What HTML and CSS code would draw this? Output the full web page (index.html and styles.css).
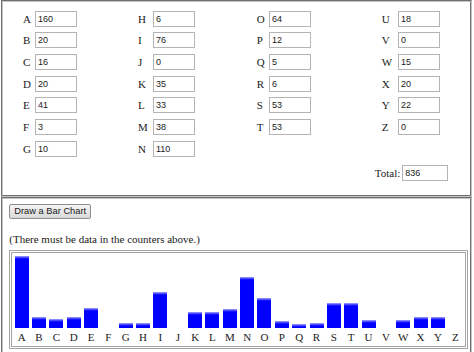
FILE: index.html
```html
<!DOCTYPE html>
<html>
<head>
<meta charset="utf-8">
<title>Letter Counter Bar Chart</title>
<link rel="stylesheet" href="styles.css">
</head>
<body>
<div class="page">
  <section class="panel counters">
    <div class="cols">
      <div class="col col-1">
        <div class="row"><span class="lbl">A</span><input class="num" value="160"></div>
        <div class="row"><span class="lbl">B</span><input class="num" value="20"></div>
        <div class="row"><span class="lbl">C</span><input class="num" value="16"></div>
        <div class="row"><span class="lbl">D</span><input class="num" value="20"></div>
        <div class="row"><span class="lbl">E</span><input class="num" value="41"></div>
        <div class="row"><span class="lbl">F</span><input class="num" value="3"></div>
        <div class="row"><span class="lbl">G</span><input class="num" value="10"></div>
      </div>
      <div class="col col-2">
        <div class="row"><span class="lbl">H</span><input class="num" value="6"></div>
        <div class="row"><span class="lbl">I</span><input class="num" value="76"></div>
        <div class="row"><span class="lbl">J</span><input class="num" value="0"></div>
        <div class="row"><span class="lbl">K</span><input class="num" value="35"></div>
        <div class="row"><span class="lbl">L</span><input class="num" value="33"></div>
        <div class="row"><span class="lbl">M</span><input class="num" value="38"></div>
        <div class="row"><span class="lbl">N</span><input class="num" value="110"></div>
      </div>
      <div class="col col-3">
        <div class="row"><span class="lbl">O</span><input class="num" value="64"></div>
        <div class="row"><span class="lbl">P</span><input class="num" value="12"></div>
        <div class="row"><span class="lbl">Q</span><input class="num" value="5"></div>
        <div class="row"><span class="lbl">R</span><input class="num" value="6"></div>
        <div class="row"><span class="lbl">S</span><input class="num" value="53"></div>
        <div class="row"><span class="lbl">T</span><input class="num" value="53"></div>
      </div>
      <div class="col col-4">
        <div class="row"><span class="lbl">U</span><input class="num" value="18"></div>
        <div class="row"><span class="lbl">V</span><input class="num" value="0"></div>
        <div class="row"><span class="lbl">W</span><input class="num" value="15"></div>
        <div class="row"><span class="lbl">X</span><input class="num" value="20"></div>
        <div class="row"><span class="lbl">Y</span><input class="num" value="22"></div>
        <div class="row"><span class="lbl">Z</span><input class="num" value="0"></div>
      </div>
    </div>
    <div class="total-row">
      <span class="total-lbl">Total:</span><input class="num total" value="836">
    </div>
  </section>

  <section class="panel chart-panel">
    <button class="draw-btn" type="button">Draw a Bar Chart</button>
    <p class="note">(There must be data in the counters above.)</p>
    <div class="chart-frame">
      <div class="chart">
        <div class="bar-col"><div class="bar-area"><div class="bar" style="height:72px"></div></div><span class="letter">A</span></div>
        <div class="bar-col"><div class="bar-area"><div class="bar" style="height:11px"></div></div><span class="letter">B</span></div>
        <div class="bar-col"><div class="bar-area"><div class="bar" style="height:9px"></div></div><span class="letter">C</span></div>
        <div class="bar-col"><div class="bar-area"><div class="bar" style="height:11px"></div></div><span class="letter">D</span></div>
        <div class="bar-col"><div class="bar-area"><div class="bar" style="height:20px"></div></div><span class="letter">E</span></div>
        <div class="bar-col"><div class="bar-area"></div><span class="letter">F</span></div>
        <div class="bar-col"><div class="bar-area"><div class="bar" style="height:5px"></div></div><span class="letter">G</span></div>
        <div class="bar-col"><div class="bar-area"><div class="bar" style="height:5px"></div></div><span class="letter">H</span></div>
        <div class="bar-col"><div class="bar-area"><div class="bar" style="height:36px"></div></div><span class="letter">I</span></div>
        <div class="bar-col"><div class="bar-area"></div><span class="letter">J</span></div>
        <div class="bar-col"><div class="bar-area"><div class="bar" style="height:16px"></div></div><span class="letter">K</span></div>
        <div class="bar-col"><div class="bar-area"><div class="bar" style="height:16px"></div></div><span class="letter">L</span></div>
        <div class="bar-col"><div class="bar-area"><div class="bar" style="height:19px"></div></div><span class="letter">M</span></div>
        <div class="bar-col"><div class="bar-area"><div class="bar" style="height:51px"></div></div><span class="letter">N</span></div>
        <div class="bar-col"><div class="bar-area"><div class="bar" style="height:30px"></div></div><span class="letter">O</span></div>
        <div class="bar-col"><div class="bar-area"><div class="bar" style="height:7px"></div></div><span class="letter">P</span></div>
        <div class="bar-col"><div class="bar-area"><div class="bar" style="height:4px"></div></div><span class="letter">Q</span></div>
        <div class="bar-col"><div class="bar-area"><div class="bar" style="height:5px"></div></div><span class="letter">R</span></div>
        <div class="bar-col"><div class="bar-area"><div class="bar" style="height:25px"></div></div><span class="letter">S</span></div>
        <div class="bar-col"><div class="bar-area"><div class="bar" style="height:25px"></div></div><span class="letter">T</span></div>
        <div class="bar-col"><div class="bar-area"><div class="bar" style="height:8px"></div></div><span class="letter">U</span></div>
        <div class="bar-col"><div class="bar-area"></div><span class="letter">V</span></div>
        <div class="bar-col"><div class="bar-area"><div class="bar" style="height:8px"></div></div><span class="letter">W</span></div>
        <div class="bar-col"><div class="bar-area"><div class="bar" style="height:11px"></div></div><span class="letter">X</span></div>
        <div class="bar-col"><div class="bar-area"><div class="bar" style="height:11px"></div></div><span class="letter">Y</span></div>
        <div class="bar-col"><div class="bar-area"></div><span class="letter">Z</span></div>
      </div>
    </div>
  </section>
</div>
</body>
</html>
```

FILE: styles.css
```css
html {
  overflow: hidden;
  background: #ffffff;
}

body {
  margin: 0;
  font-family: "Liberation Serif", "Times New Roman", serif;
  font-size: 11px;
  color: #1a1a1a;
  background: #ffffff;
}

.page {
  padding: 0 2px 0 1px;
}

.panel {
  border: 2px groove #c4c4c4;
}

/* ---------- counters ---------- */
.counters {
  padding: 6px 0 14px 20px;
}

.cols {
  display: flex;
  align-items: flex-start;
}

.col {
  display: flex;
  flex-direction: column;
}

.col-2 { margin-left: 61px; }
.col-3 { margin-left: 61.7px; }
.col-4 { margin-left: 70.7px; }

.row {
  display: flex;
  align-items: center;
  height: 21.67px;
}

.lbl {
  display: block;
}

.col-1 .lbl { width: 12px; }
.col-2 .lbl { width: 15px; }
.col-3 .lbl { width: 12.3px; }
.col-4 .lbl { width: 16.3px; }

.num {
  box-sizing: border-box;
  width: 42px;
  height: 16px;
  margin: 0;
  padding: 0 2px;
  border: 1px solid #b4b4b4;
  background: #ffffff;
  font-family: "Liberation Sans", Arial, sans-serif;
  font-size: 9px;
  color: #1a1a1a;
  outline: none;
}

.total-row {
  display: flex;
  align-items: center;
  justify-content: flex-end;
  margin-top: 5.2px;
  padding-right: 21.7px;
}

.total-lbl {
  margin-right: 2px;
}

.num.total {
  width: 46px;
}

/* ---------- chart panel ---------- */
.chart-panel {
  padding: 5.3px 1px 6px 3px;
}

.draw-btn {
  display: block;
  box-sizing: border-box;
  height: 15px;
  margin: 0 0 0 3.3px;
  padding: 0 4px;
  border: 1px solid #8e8e8e;
  border-radius: 2px;
  background: linear-gradient(#f4f4f4, #e6e6e6 50%, #d8d8d8);
  font-family: "Liberation Sans", Arial, sans-serif;
  font-size: 9.3px;
  color: #1a1a1a;
  line-height: 13px;
}

.note {
  margin: 13.5px 0 5px 3.3px;
}

.chart-frame {
  margin: 0 1px 0 3px;
  border: 1px solid #a4a4a4;
  padding: 1px;
}

.chart {
  display: flex;
  border: 1px solid #a4a4a4;
  padding: 0 1px 2.3px;
}

.bar-col {
  flex: 1 1 0;
  display: flex;
  flex-direction: column;
  align-items: center;
}

.bar-area {
  height: 75px;
  width: 100%;
  display: flex;
  align-items: flex-end;
  justify-content: center;
}

.bar {
  width: 14px;
  background: linear-gradient(#a8a8ff, #2a2aff 2px, #0000ff 3px);
}

.letter {
  margin-top: 3.7px;
}
```
